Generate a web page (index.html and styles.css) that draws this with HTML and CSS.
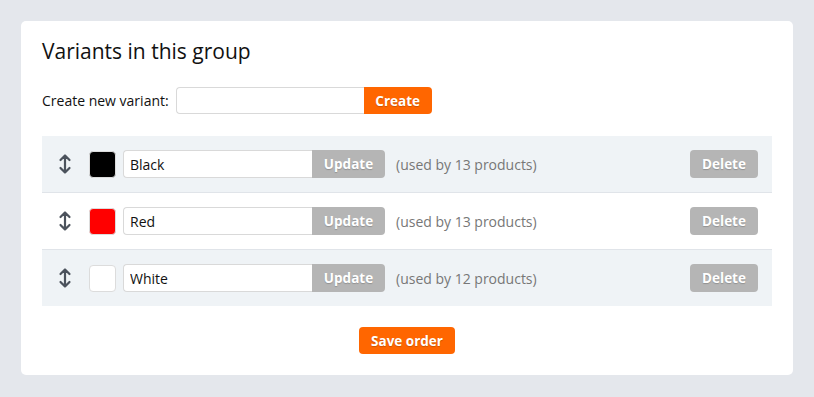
FILE: index.html
```html
<!DOCTYPE html>
<html lang="en">
<head>
    <meta charset="UTF-8">
    <meta name="viewport" content="width=device-width, initial-scale=1.0">
    <title>Variants</title>
    <link rel="stylesheet" href="styles.css">
</head>
<body>
    <div class="panel">
        <h1>Variants in this group</h1>

        <form class="create-form">
            <label for="new-variant">Create new variant:</label>
            <div class="field">
                <input type="text" id="new-variant">
                <button type="submit" class="btn btn-primary">Create</button>
            </div>
        </form>

        <ul class="variant-list">
            <li class="variant">
                <svg class="handle" width="14" height="22" viewBox="0 0 14 22"><path d="M7 2.5v17M2.5 7L7 2.5 11.5 7M2.5 15L7 19.5 11.5 15"/></svg>
                <span class="swatch" style="background: #000000"></span>
                <div class="field">
                    <input type="text" value="Black">
                    <button class="btn btn-muted">Update</button>
                </div>
                <span class="usage">(used by 13 products)</span>
                <button class="btn btn-muted btn-delete">Delete</button>
            </li>
            <li class="variant">
                <svg class="handle" width="14" height="22" viewBox="0 0 14 22"><path d="M7 2.5v17M2.5 7L7 2.5 11.5 7M2.5 15L7 19.5 11.5 15"/></svg>
                <span class="swatch" style="background: #ff0000"></span>
                <div class="field">
                    <input type="text" value="Red">
                    <button class="btn btn-muted">Update</button>
                </div>
                <span class="usage">(used by 13 products)</span>
                <button class="btn btn-muted btn-delete">Delete</button>
            </li>
            <li class="variant">
                <svg class="handle" width="14" height="22" viewBox="0 0 14 22"><path d="M7 2.5v17M2.5 7L7 2.5 11.5 7M2.5 15L7 19.5 11.5 15"/></svg>
                <span class="swatch" style="background: #ffffff"></span>
                <div class="field">
                    <input type="text" value="White">
                    <button class="btn btn-muted">Update</button>
                </div>
                <span class="usage">(used by 12 products)</span>
                <button class="btn btn-muted btn-delete">Delete</button>
            </li>
        </ul>

        <div class="actions">
            <button class="btn btn-primary btn-save">Save order</button>
        </div>
    </div>
</body>
</html>
```

FILE: styles.css
```css
:root {
    --page-bg: #e4e7ec;
    --panel-bg: #ffffff;
    --row-alt: #eff3f6;
    --row-border: #e0e4e9;
    --orange: #ff6600;
    --muted: #b5b5b5;
    --text: #111111;
    --text-soft: #777777;
}

* {
    margin: 0;
    padding: 0;
    box-sizing: border-box;
    font-family: 'Open Sans', 'Noto Sans', sans-serif;
}

body {
    background: var(--page-bg);
    padding: 21px;
    color: var(--text);
    font-size: 14px;
}

.panel {
    background: var(--panel-bg);
    border-radius: 5px;
    padding: 16px 21px 21px;
}

.panel h1 {
    font-size: 21px;
    font-weight: 400;
    line-height: 28px;
}

.create-form {
    display: flex;
    align-items: center;
    gap: 7px;
    margin-top: 22px;
}

.field {
    display: flex;
    height: 28px;
}

.field input {
    width: 189px;
    height: 100%;
    border: 1px solid #d9d9d9;
    border-right: none;
    border-radius: 4px 0 0 4px;
    padding: 0 6px;
    font-size: 14px;
    color: var(--text);
    background: #fff;
    outline: none;
}

.create-form .field {
    height: 27px;
}

.create-form .field input {
    width: 188px;
}

.btn {
    border: none;
    border-radius: 4px;
    color: #fff;
    font-size: 13.5px;
    font-weight: 700;
    height: 27px;
    padding: 0 10px;
    text-shadow: 0 1px 1px rgba(0, 0, 0, 0.2);
    cursor: pointer;
}

.field .btn {
    height: 100%;
    border-radius: 0 4px 4px 0;
}

.btn-primary {
    background: var(--orange);
}

.btn-muted {
    background: var(--muted);
}

.create-form .btn {
    width: 68px;
}

.variant .field .btn {
    width: 73px;
}

.variant-list {
    list-style: none;
    margin-top: 22px;
}

.variant {
    display: flex;
    align-items: center;
    height: 56px;
    padding: 0 14px 0 16px;
}

.variant:nth-child(odd) {
    background: var(--row-alt);
}

.variant + .variant {
    border-top: 1px solid var(--row-border);
    height: 57px;
}

.handle {
    flex: none;
    fill: none;
    stroke: #4b525c;
    stroke-width: 2.2;
    stroke-linecap: round;
    stroke-linejoin: round;
    cursor: grab;
}

.swatch {
    width: 27px;
    height: 27px;
    border-radius: 4px;
    border: 1px solid #dcdcdc;
    margin-left: 17px;
    margin-right: 7px;
}

.usage {
    color: var(--text-soft);
    margin-left: 11px;
    flex: 1;
}

.btn-delete {
    width: 68px;
    height: 28px;
}

.actions {
    display: flex;
    justify-content: center;
    margin-top: 21px;
}

.btn-save {
    width: 96px;
}
```
